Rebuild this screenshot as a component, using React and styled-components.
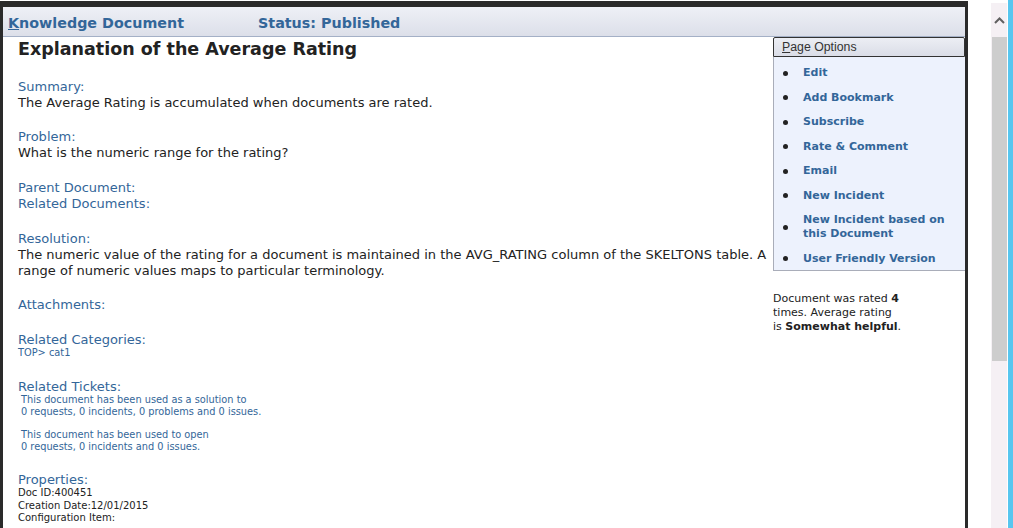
import React from "react";
import styled, { createGlobalStyle } from "styled-components";

const GlobalStyle = createGlobalStyle`
  html, body {
    margin: 0;
    padding: 0;
    background: #fff;
    overflow: hidden;
  }
  body {
    font-family: "DejaVu Sans", Verdana, sans-serif;
  }
`;

const options = [
  "Edit",
  "Add Bookmark",
  "Subscribe",
  "Rate & Comment",
  "Email",
  "New Incident",
  "New Incident based on this Document",
  "User Friendly Version",
];

const App = () => {
  return (
    <>
      <GlobalStyle />
      <Page>
        <Frame>
          <HeaderBar>
            <HeaderTitle>
              <u>K</u>nowledge Document
            </HeaderTitle>
            <HeaderTitle>Status: Published</HeaderTitle>
          </HeaderBar>

          <Body>
            <Main>
              <DocTitle>Explanation of the Average Rating</DocTitle>

              <Section $gap={18}>
                <Label>Summary:</Label>
                <Value>The Average Rating is accumulated when documents are rated.</Value>
              </Section>

              <Section>
                <Label>Problem:</Label>
                <Value>What is the numeric range for the rating?</Value>
              </Section>

              <Section>
                <Label>Parent Document:</Label>
                <Label>Related Documents:</Label>
              </Section>

              <Section $gap={18}>
                <Label>Resolution:</Label>
                <Value>
                  The numeric value of the rating for a document is maintained in the AVG_RATING
                  column of the SKELTONS table. A range of numeric values maps to particular
                  terminology.
                </Value>
              </Section>

              <Section>
                <Label>Attachments:</Label>
              </Section>

              <Section $gap={20}>
                <Label>Related Categories:</Label>
                <Small $blue>TOP&gt; cat1</Small>
              </Section>

              <Section>
                <Label>Related Tickets:</Label>
                <Ticket>
                  This document has been used as a solution to
                  <br />0 requests, 0 incidents, 0 problems and 0 issues.
                </Ticket>
                <Ticket $spaced>
                  This document has been used to open
                  <br />0 requests, 0 incidents and 0 issues.
                </Ticket>
              </Section>

              <Section>
                <Label>Properties:</Label>
                <PropList>
                  <Prop>Doc ID:400451</Prop>
                  <Prop>Creation Date:12/01/2015</Prop>
                  <Prop>Configuration Item:</Prop>
                </PropList>
              </Section>
            </Main>

            <Side>
              <OptionsHead>
                <u>P</u>age Options
              </OptionsHead>
              <OptionsList>
                {options.map((o) => (
                  <OptionItem key={o}>
                    <Bullet />
                    <OptionLink>{o}</OptionLink>
                  </OptionItem>
                ))}
              </OptionsList>
              <RatingNote>
                Document was rated <b>4</b> times. Average rating
                <br />
                is <b>Somewhat helpful</b>.
              </RatingNote>
            </Side>
          </Body>
        </Frame>

        <ScrollBar>
          <ScrollArrow>
            <svg width="11" height="7" viewBox="0 0 11 7">
              <path d="M1 6 L5.5 1.5 L10 6" fill="none" stroke="#606060" strokeWidth="2" />
            </svg>
          </ScrollArrow>
          <Thumb />
        </ScrollBar>
        <BlueEdge />
      </Page>
    </>
  );
};

export default App;

// 스타일 정의

const Page = styled.div`
  display: flex;
  height: 528px;
  overflow: hidden;
`;

const Frame = styled.div`
  width: 963px;
  margin-top: 1px;
  border: 3px solid #2a2a2a;
  border-top-width: 6px;
  border-bottom: none;
  display: flex;
  flex-direction: column;
`;

const HeaderBar = styled.div`
  height: 30px;
  flex-shrink: 0;
  display: flex;
  align-items: center;
  padding: 2px 0 0 5px;
  box-sizing: border-box;
  background: linear-gradient(#eef0f6, #dcdfe9);
  border-bottom: 1px solid #a4b0c6;
`;

const HeaderTitle = styled.span`
  width: 250px;
  font-size: 14.3px;
  font-weight: bold;
  color: #336699;
  white-space: nowrap;
`;

const Body = styled.div`
  display: flex;
  flex: 1;
`;

const Main = styled.div`
  flex: 1;
  padding-left: 15px;
  padding-right: 4px;
  color: #222;
`;

const DocTitle = styled.h1`
  margin: 1px 0 19px;
  font-size: 17.5px;
  line-height: 22px;
  font-weight: bold;
  color: #222;
`;

const Section = styled.div`
  margin-bottom: ${(p) => p.$gap ?? 19}px;
`;

const Label = styled.div`
  font-size: 13px;
  line-height: 16px;
  color: #336699;
`;

const Value = styled.div`
  font-size: 13px;
  line-height: 16px;
  color: #222;
`;

const Small = styled.div`
  margin-top: -1px;
  font-size: 9.8px;
  line-height: 12px;
  color: ${(p) => (p.$blue ? "#336699" : "#222")};
`;

const Ticket = styled(Small).attrs({ $blue: true })`
  padding-left: 3px;
  margin-top: ${(p) => (p.$spaced ? "11px" : "-1px")};
`;

const PropList = styled.div`
  margin-top: -1px;
`;

const Prop = styled.div`
  font-size: 10px;
  line-height: 12.5px;
  color: #222;
`;

const Side = styled.div`
  width: 192px;
  flex-shrink: 0;
`;

const OptionsHead = styled.div`
  height: 18px;
  display: flex;
  align-items: center;
  padding-left: 8px;
  border: 1px solid #333;
  border-radius: 2px 2px 0 0;
  background: linear-gradient(#eceef4, #dadde7);
  font-family: "Liberation Sans", Arial, sans-serif;
  font-size: 12.3px;
  color: #333;
`;

const OptionsList = styled.div`
  background: #edf2fd;
  border-left: 1px solid #a9adb9;
  border-bottom: 1px solid #a9adb9;
  padding: 9px 0 4px;
`;

const OptionItem = styled.div`
  display: flex;
  align-items: center;
  margin-bottom: 10.5px;

  &:last-child {
    margin-bottom: 0;
  }
`;

const Bullet = styled.span`
  width: 5px;
  height: 5px;
  border-radius: 50%;
  background: #222;
  margin: 0 15px 0 9px;
  flex-shrink: 0;
`;

const OptionLink = styled.span`
  font-size: 11px;
  line-height: 14px;
  font-weight: bold;
  color: #336699;
  cursor: pointer;
`;

const RatingNote = styled.div`
  width: 135px;
  margin-top: 21px;
  font-size: 11px;
  line-height: 14px;
  color: #222;
`;

const ScrollBar = styled.div`
  width: 16px;
  margin: 3px 0 0 23px;
  background: #f5f0f4;
  display: flex;
  flex-direction: column;
  align-items: center;
`;

const ScrollArrow = styled.div`
  height: 34px;
  display: flex;
  align-items: center;
  justify-content: center;
`;

const Thumb = styled.div`
  width: 15px;
  height: 324px;
  background: #cdcdcd;
`;

const BlueEdge = styled.div`
  width: 5px;
  margin-left: 1px;
  background: #57c6ef;
`;
